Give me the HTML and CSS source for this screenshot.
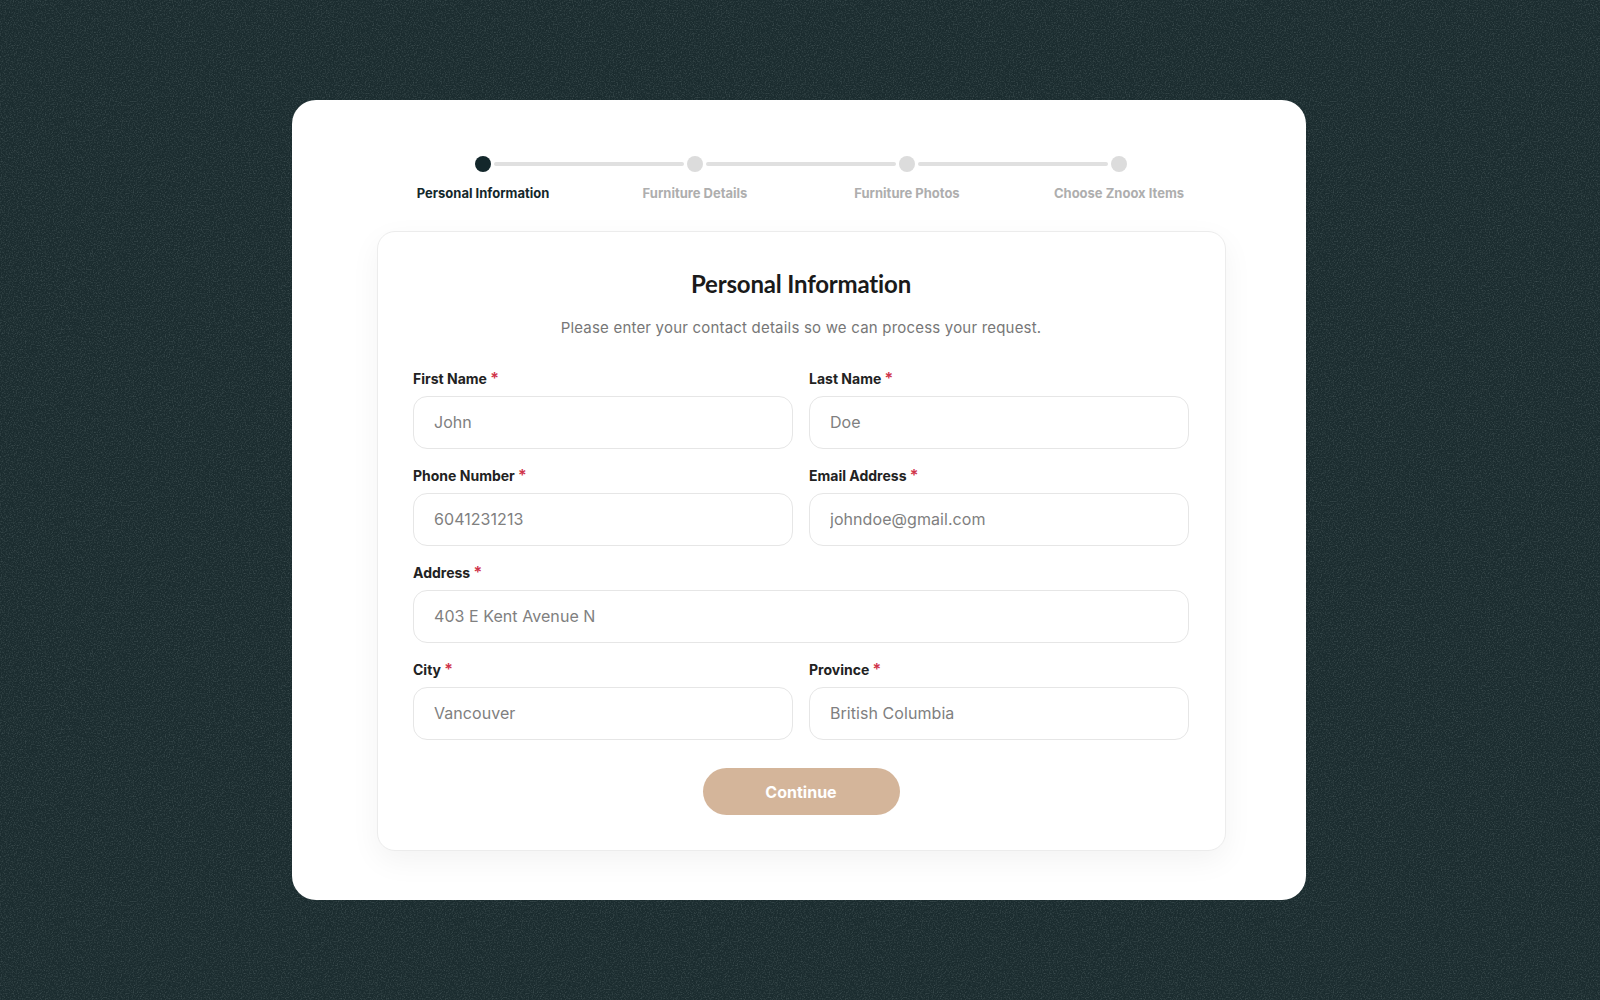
FILE: index.html
```html
<!DOCTYPE html>
<html lang="en">
<head>
<meta charset="utf-8">
<title>Personal Information</title>
<link rel="stylesheet" href="styles.css">
</head>
<body>
<main class="panel">
  <ol class="stepper">
    <li class="step step-active"><span class="dot"></span><span class="step-label">Personal Information</span></li>
    <li class="step"><span class="dot"></span><span class="step-label">Furniture Details</span></li>
    <li class="step"><span class="dot"></span><span class="step-label">Furniture Photos</span></li>
    <li class="step"><span class="dot"></span><span class="step-label">Choose Znoox Items</span></li>
  </ol>
  <form class="form-card">
    <h1 class="title">Personal Information</h1>
    <p class="subtitle">Please enter your contact details so we can process your request.</p>
    <div class="fields">
      <label class="field"><span class="field-label">First Name <em>*</em></span><input class="input" placeholder="John"></label>
      <label class="field"><span class="field-label">Last Name <em>*</em></span><input class="input" placeholder="Doe"></label>
      <label class="field"><span class="field-label">Phone Number <em>*</em></span><input class="input" placeholder="6041231213"></label>
      <label class="field"><span class="field-label">Email Address <em>*</em></span><input class="input" placeholder="johndoe@gmail.com"></label>
      <label class="field field-wide"><span class="field-label">Address <em>*</em></span><input class="input" placeholder="403 E Kent Avenue N"></label>
      <label class="field"><span class="field-label">City <em>*</em></span><input class="input" placeholder="Vancouver"></label>
      <label class="field"><span class="field-label">Province <em>*</em></span><input class="input" placeholder="British Columbia"></label>
    </div>
    <button type="button" class="continue">Continue</button>
  </form>
</main>
</body>
</html>
```
FILE: styles.css
```css
* { box-sizing: border-box; }
html, body { margin: 0; height: 100%; }
body {
  display: flex;
  align-items: center;
  justify-content: center;
  padding-right: 2px;
  height: 1000px;
  overflow: hidden;
  font-family: Inter, "Liberation Sans", sans-serif;
  background-color: #1b2c2f;
  background-image: url("data:image/svg+xml,%3Csvg xmlns='http://www.w3.org/2000/svg' width='400' height='400'%3E%3Cfilter id='n'%3E%3CfeTurbulence type='fractalNoise' baseFrequency='.75' numOctaves='2' stitchTiles='stitch'/%3E%3CfeColorMatrix values='0 0 0 0 .5 0 0 0 0 .6 0 0 0 0 .6 1.6 0 0 0 -.72'/%3E%3C/filter%3E%3Crect width='400' height='400' filter='url(%23n)' opacity='.28'/%3E%3C/svg%3E");
}
.panel {
  width: 1014px;
  padding: 56px 80px 49px 85px;
  background: #fff;
  border-radius: 24px;
}
.stepper {
  display: grid;
  grid-template-columns: repeat(4, 212px);
  margin: 0;
  padding: 0;
  list-style: none;
}
.step {
  position: relative;
  display: flex;
  flex-direction: column;
  align-items: center;
  gap: 13px;
}
.step:not(:last-child)::after {
  content: "";
  position: absolute;
  top: 6px;
  left: calc(50% + 11px);
  width: 190px;
  height: 4px;
  border-radius: 2px;
  background: #e0e0e0;
}
.dot {
  width: 16px;
  height: 16px;
  border-radius: 50%;
  background: #dcdcdc;
}
.step-active .dot { background: #13272b; }
.step-label {
  font-size: 13px;
  line-height: 16px;
  font-weight: 700;
  color: #aeaeae;
  white-space: nowrap;
}
.step-active .step-label { color: #13272b; }
.form-card {
  display: flex;
  flex-direction: column;
  align-items: center;
  margin-top: 30px;
  height: 620px;
  padding: 35px 36px 35px 35px;
  background: #fff;
  border: 1px solid #ececec;
  border-radius: 18px;
  box-shadow: 0 10px 30px rgba(0, 0, 0, .05);
}
.title {
  margin: 0;
  font-family: Lato, sans-serif;
  font-size: 24px;
  line-height: 34px;
  font-weight: 700;
  font-variant-ligatures: none;
  letter-spacing: -.18px;
  color: #1a1a1a;
}
.subtitle {
  margin: 15px 0 0;
  font-size: 15px;
  line-height: 24px;
  letter-spacing: .2px;
  color: #777;
}
.fields {
  display: grid;
  grid-template-columns: 1fr 1fr;
  gap: 18.1px 16px;
  width: 100%;
  margin-top: 30px;
}
.field { display: flex; flex-direction: column; gap: 8px; }
.field-wide { grid-column: 1 / -1; }
.field-label {
  font-size: 14px;
  line-height: 18px;
  font-weight: 700;
  color: #222;
}
.field-label em {
  font-size: 16px;
  line-height: 0;
  font-style: normal;
  font-weight: 600;
  color: #d0344a;
}
.input {
  width: 100%;
  height: 53px;
  padding: 0 19px 1px 20px;
  font: 400 16px Inter, "Liberation Sans", sans-serif;
  letter-spacing: .06px;
  background: #fff;
  border: 1px solid #e6e6e6;
  border-radius: 14px;
  outline: none;
}
.input::placeholder { color: #808080; opacity: 1; }
.continue {
  width: 197px;
  height: 47px;
  margin-top: 28px;
  font: 700 16px Inter, "Liberation Sans", sans-serif;
  color: #fff;
  background: #d4b59a;
  border: 0;
  border-radius: 24px;
}
```
